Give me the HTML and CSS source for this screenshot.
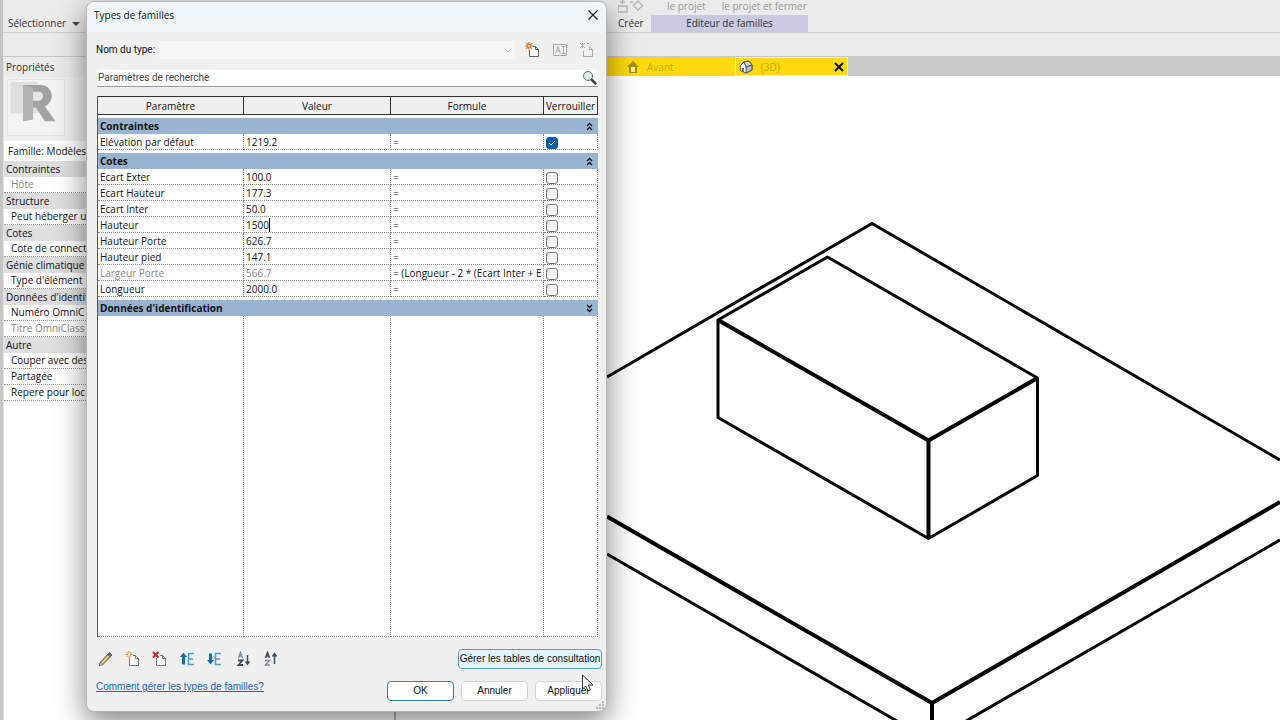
FILE: index.html
```html
<!DOCTYPE html>
<html lang="fr">
<head>
    <meta charset="utf-8">
    <title>Types de familles</title>
    <link rel="stylesheet" href="styles.css">
</head>
<body>
    <div class="app">
        <header class="ribbon">
            <div class="ribbon-panel panel-select">
                <button class="panel-title">Sélectionner <span class="caret"></span></button>
            </div>
            <div class="ribbon-panel panel-create">
                <svg class="create-icon" width="28" height="14" viewBox="0 0 28 14" fill="none" stroke="#b5b5b5" stroke-width="1.300">
                    <path d="M0 6h9v6H0zM2 2h5M4.500 0v4M12 2h3M20 1l4.500 4.500-4.500 4.500-4.500-4.500z"/>
                </svg>
                <span class="panel-title">Créer</span>
            </div>
            <div class="ribbon-panel panel-editor">
                <div class="editor-actions"><span>le projet</span><span>le projet et fermer</span></div>
                <span class="panel-title editor-title">Editeur de familles</span>
            </div>
        </header>
        <div class="options-bar"></div>

        <div class="workspace">
            <aside class="properties">
                <h2 class="properties-title">Propriétés</h2>
                <div class="family-preview">
                    <svg width="58" height="57" viewBox="0 0 56 56">
                        <path d="M2 2h28v32H2z" fill="#dfdfdf"/>
                        <path d="M15 5h17c8 0 12 5 12 11 0 5-3 9-7 11l11 15H37l-9-14h-3v12l-10 2z" fill="#a2a2a2"/>
                        <path d="M15 5l10 3v32l-10 2z" fill="#b4b4b4"/>
                        <path d="M25 12h6c3 0 4 2 4 4s-1 5-4 5h-6z" fill="#e6e6e6"/>
                    </svg>
                </div>
                <div class="family-name">Famille: Modèles</div>
                <ul class="prop-list">
                    <li class="prop-group">Contraintes</li>
                    <li class="muted">Hôte</li>
                    <li class="prop-group">Structure</li>
                    <li>Peut héberger u</li>
                    <li class="prop-group">Cotes</li>
                    <li>Cote de connect</li>
                    <li class="prop-group">Génie climatique</li>
                    <li>Type d'élément</li>
                    <li class="prop-group">Données d'identif</li>
                    <li>Numéro OmniC</li>
                    <li class="muted">Titre OmniClass</li>
                    <li class="prop-group">Autre</li>
                    <li>Couper avec des</li>
                    <li>Partagée</li>
                    <li>Repere pour loc</li>
                </ul>
            </aside>

            <main class="viewer">
                <nav class="view-tabs">
                    <button class="view-tab tab-front">
                        <svg width="14" height="14" viewBox="0 0 14 14"><path d="M7 1l6 6h-2v6H3V7H1z" fill="#a99000"/><path d="M5 7h4v5H5z" fill="#fff2a8"/></svg>
                        Avant
                    </button>
                    <button class="view-tab tab-3d">
                        <svg width="14" height="14" viewBox="0 0 14 14" stroke="#555" stroke-linejoin="round"><path d="M1 6l4-4 5-1 3 4v5l-6 3-5-2z" fill="#fff"/><path d="M5 2l5-1 3 4-6 2z" fill="#cfd6dc"/><path d="M7 7l6-2v5l-6 3z" fill="#a9c0d4"/><path d="M3 8h2v4H3z" fill="#777" stroke="none"/></svg>
                        {3D}
                        <svg class="tab-close" width="10" height="10" viewBox="0 0 10 10"><path d="M1 1l8 8M9 1L1 9" stroke="#111" stroke-width="2"/></svg>
                    </button>
                </nav>
                <svg class="scene" viewBox="396 76 884 644" preserveAspectRatio="xMinYMin slice">
                    <!-- base slab -->
                    <path class="edge" d="M607 377L872 223.500L1280 460M607 554L897 721M1280 540L966 721"/>
                    <path class="edge bold" d="M607 516.500L932 703L1280 502"/>
                    <path class="edge mid" d="M932 703V721"/>
                    <!-- box -->
                    <path class="edge" d="M718 320L827.500 257L1037.500 378V475.500L928.500 538.500L718 417.500z"/>
                    <path class="edge bold" d="M718 320L928.500 440.500L1037.500 378"/>
                    <path class="edge mid" d="M928.500 440V538"/>
                </svg>
            </main>
        </div>
    </div>

    <section class="dialog" role="dialog" aria-labelledby="dialog-title">
        <div class="dialog-titlebar">
            <h1 id="dialog-title">Types de familles</h1>
            <button class="icon-btn" aria-label="Fermer">
                <svg width="12" height="12" viewBox="0 0 12 12"><path d="M1.500 1.500l9 9M10.500 1.500l-9 9" stroke="#222" stroke-width="1.200"/></svg>
            </button>
        </div>

        <div class="dialog-body">
            <div class="type-row">
                <label for="type-name">Nom du type:</label>
                <select id="type-name" disabled></select>
                <button class="icon-btn" aria-label="Nouveau type">
                    <svg width="16" height="16" viewBox="0 0 16 16"><path d="M4.500 8v6.500h9V7.500l-3-3H8" fill="#fff" stroke="#666"/><path d="M10.500 4v3.500H14" fill="none" stroke="#666"/><circle cx="4" cy="4" r="1.800" fill="#fff" stroke="#e07820" stroke-width="1.800"/><path d="M4 0v1M4 7v1M0 4h1M7 4h1M1 1l1 1M7 1L6 2M1 7l1-1M7 7L6 6" stroke="#e07820"/></svg>
                </button>
                <button class="icon-btn" aria-label="Renommer" disabled>
                    <svg width="16" height="16" viewBox="0 0 16 16" fill="none" stroke="#aaa"><path d="M1.500 2.500h13v11h-13zM3.500 11.500l2.500-7 2.500 7M4.500 9h3M9.500 4.500h4M9.500 11.500h4M11.500 5v6"/></svg>
                </button>
                <button class="icon-btn" aria-label="Supprimer" disabled>
                    <svg width="16" height="16" viewBox="0 0 16 16" fill="none" stroke="#aaa"><path d="M4.500 9v5.500h9V7.500l-3-3v3H14M1 1l5 5M6 1L1 6M3.500 1v5M8 1.500h2"/></svg>
                </button>
            </div>

            <div class="search-row">
                <input type="text" aria-label="Paramètres de recherche" placeholder="Paramètres de recherche">
                <svg width="16" height="16" viewBox="0 0 16 16"><path d="M9.500 9.500l4 4" stroke="#444" stroke-width="2.500" stroke-linecap="round"/><circle cx="6" cy="6" r="4.500" fill="#d9efe9" stroke="#666"/></svg>
            </div>

            <table class="param-table">
                <colgroup><col class="col-name"><col class="col-value"><col class="col-formula"><col class="col-lock"></colgroup>
                <thead>
                    <tr><th>Paramètre</th><th>Valeur</th><th>Formule</th><th>Verrouiller</th></tr>
                </thead>
                <tbody id="param-body"></tbody>
            </table>

            <div class="toolbar">
                <button class="icon-btn" aria-label="Modifier le paramètre">
                    <svg width="16" height="16" viewBox="0 0 16 16"><path d="M1.500 14.500l1-3.500 9-9.500 2.500 2.500-9 9.500z" fill="#c9a860" stroke="#666"/><path d="M4 12l8-8.500" stroke="#fff0c8"/><path d="M11 1.500l3 3-2 2-3-3z" fill="#666"/><path d="M1.500 14.500l1-3.500 2.500 2.500z" fill="#fff" stroke="#777"/></svg>
                </button>
                <button class="icon-btn" aria-label="Nouveau paramètre">
                    <svg width="16" height="16" viewBox="0 0 16 16"><path d="M4.500 7v7.500h9V7.500l-3-3H8" fill="#fff" stroke="#777"/><path d="M10.500 4v3.500H14" fill="none" stroke="#777"/><path d="M4 0v7M.5 3.500h7M1.500 1l5 5M6.500 1l-5 5" stroke="#e08a20"/><circle cx="4" cy="3.500" r="1.200" fill="#fff"/></svg>
                </button>
                <button class="icon-btn" aria-label="Supprimer le paramètre">
                    <svg width="16" height="16" viewBox="0 0 16 16"><path d="M4.500 7v7.500h9V7.500l-3-3H8" fill="#fff" stroke="#777"/><path d="M10.500 4v3.500H14" fill="none" stroke="#777"/><path d="M1 1l5.500 5.500M6.500 1L1 6.500" stroke="#c62a2a" stroke-width="2"/></svg>
                </button>
                <button class="icon-btn" aria-label="Monter">
                    <svg width="16" height="16" viewBox="0 0 16 16"><path d="M4.500 1.500L8 6H6v7.500H3V6H1z" fill="#156fa5"/><path d="M15 2.500H9.500v11H15M9.500 8H14" fill="none" stroke="#4b9cc7" stroke-width="1.500"/></svg>
                </button>
                <button class="icon-btn" aria-label="Descendre">
                    <svg width="16" height="16" viewBox="0 0 16 16"><path d="M4.500 13.500L8 9H6V2.500H3V9H1z" fill="#156fa5"/><path d="M15 2.500H9.500v11H15M9.500 8H14" fill="none" stroke="#4b9cc7" stroke-width="1.500"/></svg>
                </button>
                <button class="icon-btn sort-btn" aria-label="Tri croissant">
                    <svg width="16" height="16" viewBox="0 0 16 16" fill="none" stroke="#3f4c5c"><path d="M2.500 7l2-5.500 2 5.500M3 5h3" stroke="#7d8894" stroke-width="1.300"/><path d="M2 9.500h4.500L2.500 14H7" stroke-width="1.800"/><path d="M11.500 4v9M9.500 10.500l2 2.500 2-2.500" stroke-width="1.500"/></svg>
                </button>
                <button class="icon-btn" aria-label="Tri décroissant">
                    <svg width="16" height="16" viewBox="0 0 16 16" fill="none" stroke="#3f4c5c"><path d="M2.500 7l2-5.500 2 5.500M3 5h3" stroke-width="1.600"/><path d="M2 9.500h4.500L2.500 14H7" stroke="#7d8894" stroke-width="1.300"/><path d="M11.500 13V3M9.500 5.500l2-3 2 3" stroke-width="1.500"/></svg>
                </button>
                <button class="btn lookup-btn">Gérer les tables de consultation</button>
            </div>

            <div class="dialog-footer">
                <a class="help-link" href="#">Comment gérer les types de familles?</a>
                <button class="btn primary">OK</button>
                <button class="btn">Annuler</button>
                <button class="btn">Appliquer</button>
            </div>
        </div>
        <svg class="resize-grip" width="10" height="10" viewBox="0 0 10 10" fill="#b5b5b5"><path d="M7 1h2v2H7zM4 4h2v2H4zM7 4h2v2H7zM1 7h2v2H1zM4 7h2v2H4zM7 7h2v2H7z"/></svg>
    </section>

    <svg class="cursor" width="16" height="20" viewBox="0 0 16 20"><path d="M1.500 1v14l3.200-3 2.300 5 2.500-1-2.200-5h4.700z" fill="#fff" stroke="#333"/></svg>

    <script>
        const groups = [
            { name: 'Contraintes', open: true, rows: [
                ['Elévation par défaut', '1219.2', '=', true]
            ]},
            { name: 'Cotes', open: true, rows: [
                ['Ecart Exter', '100.0', '='],
                ['Ecart Hauteur', '177.3', '='],
                ['Ecart Inter', '50.0', '='],
                ['Hauteur', '1500', '=', false, 'editing'],
                ['Hauteur Porte', '626.7', '='],
                ['Hauteur pied', '147.1', '='],
                ['Largeur Porte', '566.7', '= (Longueur - 2 * (Ecart Inter + E', false, 'muted'],
                ['Longueur', '2000.0', '=']
            ]},
            { name: "Données d'identification", open: false, rows: [] }
        ];

        function chevron(open) {
            const d = open ? 'M1 4l2.500-2.500L6 4M1 8l2.500-2.500L6 8' : 'M1 1l2.500 2.500L6 1M1 5l2.500 2.500L6 5';
            return `<svg width="7" height="9" viewBox="0 0 7 9"><path d="${d}" fill="none" stroke="#111" stroke-width="1.300"/></svg>`;
        }

        function paramRow([name, value, formula, locked, state]) {
            return `
                <tr class="param ${state || ''}">
                    <td>${name}</td>
                    <td><span class="value">${value}</span></td>
                    <td class="formula">${formula}</td>
                    <td><input type="checkbox" aria-label="Verrouiller ${name}" ${locked ? 'checked' : ''}></td>
                </tr>`;
        }

        document.getElementById('param-body').innerHTML = groups.map(g => `
            <tr class="group"><th colspan="4"><div>${g.name}${chevron(g.open)}</div></th></tr>
            ${g.rows.map(paramRow).join('')}
        `).join('') + '<tr class="filler"><td></td><td></td><td></td><td></td></tr>';
    </script>
</body>
</html>
```
FILE: styles.css
```css
* {
    box-sizing: border-box;
}

body {
    margin: 0;
    font-family: "Open Sans", "Noto Sans", sans-serif;
    font-size: 10px;
    line-height: 16px;
    color: #111;
    overflow: hidden;
}

button,
input,
select {
    font: inherit;
    color: inherit;
}

button {
    border: none;
    background: none;
    padding: 0;
}

.app {
    display: flex;
    flex-direction: column;
    height: 100vh;
    background: #ebebeb;
    border-left: 3px solid #c4c4c4;
}

/* Ribbon */
.ribbon {
    display: flex;
    height: 33px;
    overflow: hidden;
    border-bottom: 1px solid #cfcfcf;
}

.ribbon-panel {
    display: flex;
    flex-direction: column;
    justify-content: flex-end;
}

.panel-select {
    width: 607px;
    padding-left: 5px;
}

.panel-title {
    text-align: left;
    color: #333;
    line-height: 18px;
}

.caret {
    display: inline-block;
    margin-left: 3px;
    border: 4px solid transparent;
    border-top-color: #444;
    border-bottom: none;
    vertical-align: 1px;
}

.panel-create {
    width: 41px;
    padding-left: 8px;
}

.panel-editor {
    width: 160px;
}

.editor-actions {
    display: flex;
    gap: 16px;
    margin-bottom: 3px;
    padding-left: 16px;
    line-height: 12px;
    white-space: nowrap;
    color: #999;
}

.editor-title {
    width: 157px;
    height: 17px;
    line-height: 17px;
    background: #c9c9e2;
    text-align: center;
}

.options-bar {
    height: 24px;
    border-bottom: 1px solid #c8c8c8;
}

.workspace {
    display: flex;
    flex: 1;
    min-height: 0;
}

/* Properties palette */
.properties {
    width: 393px;
    background: #fff;
    border-left: 1px solid #e2e2e2;
    border-right: 2px solid #b8b8b8;
}

.properties-title {
    margin: 0;
    padding: 2px;
    font-size: 10px;
    font-weight: normal;
    background: #ebebeb;
    color: #333;
}

.family-preview {
    padding: 2px 3px;
    height: 64px;
    background: #f0f0f0;
}

.family-preview svg {
    border: 1px solid #e2e2e2;
    background: #f3f3f3;
}

.family-name {
    height: 20px;
    line-height: 20px;
    padding-left: 4px;
}

.prop-list {
    list-style: none;
    margin: 0;
    padding: 0;
}

.prop-list li {
    height: 16px;
    line-height: 14px;
    padding-left: 7px;
    border-bottom: 1px dotted #999;
}

.prop-list .prop-group {
    padding-left: 2px;
    line-height: 16px;
    background: #dedede;
    border-bottom: none;
}

.muted,
.prop-list .muted {
    color: #888;
}

/* 3D view */
.viewer {
    display: flex;
    flex-direction: column;
    flex: 1;
    min-width: 0;
    background: #fff;
}

.view-tabs {
    display: flex;
    height: 19px;
    background: #c9c9c9;
}

.view-tab {
    display: flex;
    align-items: center;
    gap: 7px;
    background: #ffd90f;
    color: #c9a800;
}

.tab-front {
    width: 339px;
    padding-left: 230px;
}

.tab-3d {
    width: 113px;
    padding: 0 3px;
    border: 1px solid #fff0a0;
}

.tab-close {
    margin-left: auto;
}

.scene {
    flex: 1;
    min-height: 0;
    width: 100%;
}

.edge {
    fill: none;
    stroke: #000;
    stroke-width: 3;
    stroke-linejoin: round;
}

.edge.bold,
.edge.mid {
    stroke-width: 4;
}

/* Dialog */
.dialog {
    position: absolute;
    top: 1px;
    left: 86px;
    width: 521px;
    background: #f0f0f0;
    border: 1px solid #b4b4b4;
    border-radius: 8px;
    overflow: hidden;
    box-shadow: 0 10px 30px rgba(0, 0, 0, 0.5);
}

.dialog-titlebar {
    display: flex;
    align-items: center;
    justify-content: space-between;
    height: 30px;
    padding: 0 7px 4px 7px;
    background: #eff5f9;
}

.dialog-titlebar h1 {
    margin: 0;
    font-size: 10px;
    font-weight: normal;
}

.icon-btn {
    display: flex;
}

.dialog-body {
    padding: 8px 4px 8px 9px;
}

.type-row,
.search-row {
    font-family: Roboto, "Liberation Sans", sans-serif;
}

.btn,
.help-link {
    font-family: "Liberation Sans", Arial, sans-serif;
}

.type-row {
    display: flex;
    align-items: center;
    height: 20px;
    padding-right: 7px;
}

.type-row label {
    width: 63px;
    white-space: nowrap;
}

.type-row select {
    flex: 1;
    height: 18px;
    margin-right: 10px;
    border: none;
    appearance: none;
    background: #f9f9f9 url("data:image/svg+xml,%3Csvg xmlns='http://www.w3.org/2000/svg' width='8' height='5'%3E%3Cpath d='M.5.5L4 4 7.500.5' fill='none' stroke='%23bbb'/%3E%3C/svg%3E") no-repeat right 3px center;
}

.type-row .icon-btn + .icon-btn {
    margin-left: 11px;
}

.search-row {
    display: flex;
    align-items: center;
    height: 17px;
    margin: 10px 4px 9px 1px;
    background: #fff;
    border-bottom: 1px solid #999;
}

.search-row input {
    flex: 1;
    height: 15px;
    padding: 0 1px;
    border: none;
    background: none;
}

.search-row input::placeholder {
    color: #444;
}

.param-table {
    table-layout: fixed;
    width: 501px;
    margin-left: 1px;
    border-spacing: 0;
    background: #fff;
    border-left: 1px solid #555;
}

.col-name {
    width: 146px;
}

.col-value {
    width: 147px;
}

.col-formula {
    width: 153px;
}

.param-table thead th {
    height: 19px;
    padding: 0;
    font-weight: normal;
    white-space: nowrap;
    background: #f0f0f0;
    border: solid #333;
    border-width: 1px 1px 1px 0;
}

.group th {
    height: 19px;
    padding: 0;
    border-top: 3px solid #fff;
    background: #99b4d1;
}

.group div {
    display: flex;
    align-items: center;
    justify-content: space-between;
    height: 16px;
    padding: 0 5px 0 2px;
}

.param td {
    height: 16px;
    padding: 1px 0 0 2px;
    line-height: 14px;
    white-space: nowrap;
    overflow: hidden;
    border: dotted #888;
    border-width: 0 1px 1px 0;
}

.param.muted .formula {
    color: #111;
}

.editing .value {
    border-right: 1px solid #000;
}

.param input {
    appearance: none;
    display: block;
    width: 12px;
    height: 12px;
    margin: 2px 0 0;
    border: 1px solid #777;
    border-radius: 3px;
    background: #f6f6f6;
}

.param input:checked {
    border-color: #0a5cad;
    background: #0a5cad url("data:image/svg+xml,%3Csvg xmlns='http://www.w3.org/2000/svg' width='8' height='6'%3E%3Cpath d='M1 3l2 2 4-4' fill='none' stroke='white'/%3E%3C/svg%3E") no-repeat center;
}

.filler td {
    height: 321px;
    padding: 0;
    border: dotted #888;
    border-width: 0 1px 1px 0;
}

.toolbar {
    display: flex;
    align-items: center;
    gap: 11px;
    height: 20px;
    margin-top: 12px;
    padding-left: 2px;
}

.sort-btn {
    margin-left: 3px;
}

.btn {
    width: 67px;
    height: 20px;
    border: 1px solid #d4d4d4;
    border-radius: 4px;
    background: #fdfdfd;
    line-height: 18px;
}

.btn.primary {
    border-color: #2f7fc4;
}

.lookup-btn {
    width: 144px;
    margin-left: auto;
    white-space: nowrap;
    border-color: #5b9bc8;
    background: #e8f2fa;
}

.dialog-footer {
    display: flex;
    align-items: center;
    gap: 7px;
    margin-top: 10px;
}

.help-link {
    margin-right: auto;
    padding-bottom: 8px;
    color: #1a66b8;
}

.resize-grip {
    position: absolute;
    right: 1px;
    bottom: 1px;
}

.cursor {
    position: absolute;
    left: 581px;
    top: 674px;
}
```
